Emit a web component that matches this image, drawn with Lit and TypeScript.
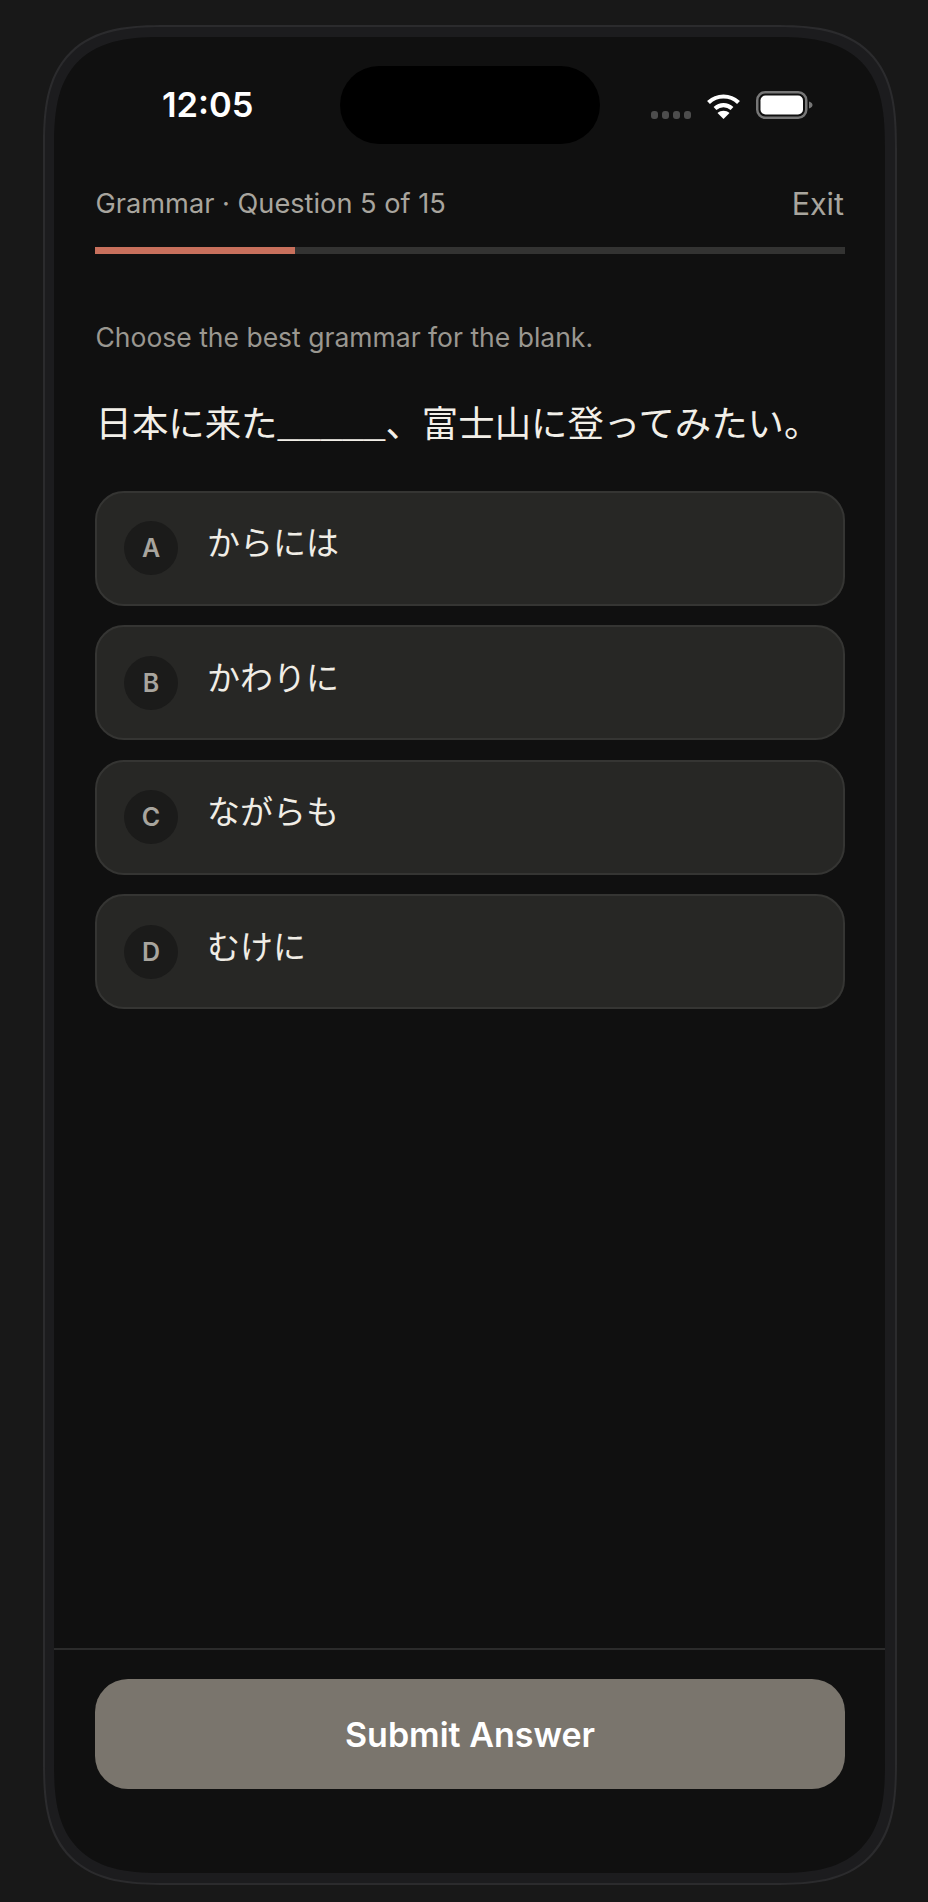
import { LitElement, html, css } from "lit";
import { customElement } from "lit/decorators.js";

const OPTIONS = [
  ["A", "からには"],
  ["B", "かわりに"],
  ["C", "ながらも"],
  ["D", "むけに"],
];

@customElement("app-root")
export class AppRoot extends LitElement {
  static styles = css`
    :host {
      display: block;
      box-sizing: border-box;
      width: 928px;
      height: 1902px;
      padding: 25px 31px 17px 43px;
      background: #181818;
      font-family: Inter, "Noto Sans CJK JP", sans-serif;
    }
    * { box-sizing: border-box; }
    .phone {
      height: 100%;
      padding: 10px 10px 10px 9px;
      border: 2px solid #2b2b2d;
      border-radius: 124px;
      corner-shape: superellipse(1.5);
      background: #1c1c1e;
    }
    .screen {
      position: relative;
      height: 100%;
      display: flex;
      flex-direction: column;
      border-radius: 112px;
      corner-shape: superellipse(1.5);
      background: #101010;
      overflow: hidden;
    }
    .island {
      position: absolute;
      left: 286px;
      top: 29px;
      width: 260px;
      height: 78px;
      border-radius: 39px;
      background: #000;
    }
    .status {
      height: 108px;
      flex: none;
      display: flex;
      justify-content: space-between;
      align-items: flex-start;
      padding: 48px 72px 0 108px;
    }
    .time {
      font-size: 34.5px;
      font-weight: 600;
      color: #fff;
      line-height: 40px;
    }
    .icons {
      display: flex;
      align-items: center;
      margin-top: 6px;
    }
    .dots {
      display: flex;
      gap: 3.5px;
      margin: 20px 15px 0 0;
    }
    .dots i {
      width: 7.5px;
      height: 7.5px;
      border-radius: 3px;
      background: #4d4d4d;
    }
    .wifi { display: block; margin-right: 15px; }
    .battery { display: block; }
    .body {
      flex: 1;
      padding: 0 40px 0 41px;
    }
    .head {
      display: flex;
      justify-content: space-between;
      align-items: center;
      height: 36px;
      margin-top: 40px;
      color: #a8a59e;
    }
    .crumb { font-size: 27.2px; margin-left: 0.5px; }
    .exit { font-size: 30.5px; margin-right: 1px; }
    .track {
      height: 7px;
      margin-top: 26px;
      background: #333332;
    }
    .fill {
      height: 100%;
      background: #c8705c;
    }
    .prompt {
      margin: 66px 0 0 0.5px;
      font-size: 26.5px;
      line-height: 34px;
      color: #9a9790;
    }
    .question {
      height: 50px;
      margin: 45px 0 0 0.5px;
      font-size: 36.4px;
      line-height: 50px;
      font-weight: 400;
      color: #f2efe8;
      white-space: nowrap;
    }
    .blank { font-family: "Liberation Mono", monospace; font-size: 36px; }
    .options {
      display: flex;
      flex-direction: column;
      gap: 19.5px;
      margin-top: 41.5px;
    }
    .option {
      height: 115px;
      display: flex;
      align-items: center;
      gap: 29px;
      padding-left: 27px;
      border: 2px solid #353533;
      border-radius: 29px;
      background: #272725;
    }
    .badge {
      width: 54px;
      height: 54px;
      flex: none;
      display: flex;
      align-items: center;
      justify-content: center;
      border-radius: 50%;
      background: #1b1b1a;
      color: #a8a59e;
      font-size: 25px;
      font-weight: 560;
    }
    .label {
      font-size: 33px;
      line-height: 44px;
      color: #f0ede6;
      margin-top: -10px;
    }
    .foot {
      flex: none;
      height: 225px;
      padding: 29px 40px 0 41px;
      border-top: 2px solid #2b2b2b;
    }
    .submit {
      height: 110px;
      display: flex;
      align-items: center;
      justify-content: center;
      border-radius: 33px;
      background: #7a756d;
      color: #fff;
      font-size: 34px;
      font-weight: 580;
    }
  `;

  render() {
    return html`
      <div class="phone">
        <div class="screen">
          <div class="island"></div>
          <div class="status">
            <div class="time">12:05</div>
            <div class="icons">
              <div class="dots"><i></i><i></i><i></i><i></i></div>
              <svg class="wifi" width="35" height="28" viewBox="0 0 35 28">
                <path d="M2.5 11.5C11 3.5 24 3.5 32.5 11.5" fill="none" stroke="#fff" stroke-width="4.2" />
                <path d="M9 17.5C14 13 21 13 26 17.5" fill="none" stroke="#fff" stroke-width="4.2" />
                <path d="M17.5 28L11.5 22C15 19 20 19 23.500 22Z" fill="#fff" />
              </svg>
              <svg class="battery" width="57" height="28" viewBox="0 0 57 28">
                <rect x="1.25" y="1.25" width="49" height="25.500" rx="8" fill="none" stroke="#777" stroke-width="2.500" />
                <rect x="4.500" y="4.500" width="42.500" height="19" rx="5" fill="#fff" />
                <path d="M53 10.500C55.500 11.500 56.500 12.500 56.500 14C56.500 15.500 55.500 16.500 53 17.500Z" fill="#777" />
              </svg>
            </div>
          </div>
          <div class="body">
            <div class="head">
              <div class="crumb">Grammar · Question 5 of 15</div>
              <div class="exit">Exit</div>
            </div>
            <div class="track"><div class="fill" style="width: ${(4 / 15) * 100}%"></div></div>
            <div class="prompt">Choose the best grammar for the blank.</div>
            <div class="question">日本に来た<span class="blank">_____</span>、富士山に登ってみたい。</div>
            <div class="options">
              ${OPTIONS.map(
                ([k, t]) => html`
                  <div class="option">
                    <div class="badge">${k}</div>
                    <div class="label">${t}</div>
                  </div>
                `
              )}
            </div>
          </div>
          <div class="foot"><div class="submit">Submit Answer</div></div>
        </div>
      </div>
    `;
  }
}
